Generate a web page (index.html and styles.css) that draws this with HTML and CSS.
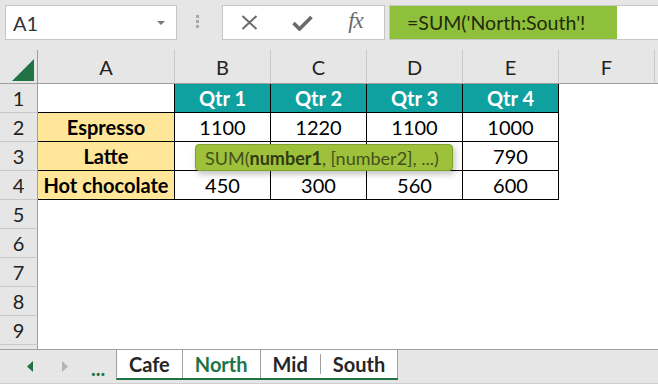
FILE: index.html
```html
<!DOCTYPE html>
<html lang="en">
<head>
    <meta charset="UTF-8">
    <title>North:South</title>
    <link rel="stylesheet" href="styles.css">
</head>
<body>
    <div class="formula-bar">
        <div class="name-box">
            <span>A1</span>
            <svg class="caret" width="8" height="4" viewBox="0 0 8 4"><polygon points="0,0 8,0 4,4" fill="#7a7a7a"/></svg>
        </div>
        <div class="grip"><i></i><i></i><i></i></div>
        <div class="fx-box">
            <span class="fx-slot">
                <svg width="17" height="15" viewBox="0 0 17 15"><path d="M1.5 1 L15.5 14 M15.5 1 L1.5 14" stroke="#6b6b6b" stroke-width="2" fill="none"/></svg>
            </span>
            <span class="fx-slot">
                <svg width="21" height="16" viewBox="0 0 21 16"><polyline points="1.5,8 7.5,14 19.5,2" stroke="#6b6b6b" stroke-width="3.6" fill="none"/></svg>
            </span>
            <span class="fx-slot fx">fx</span>
        </div>
        <div class="formula-input">
            <span class="formula-text">=SUM('North:South'!</span>
        </div>
    </div>

    <div class="sheet">
        <div class="hdr corner">
            <svg width="22" height="22" viewBox="0 0 22 22"><polygon points="22,0 22,22 0,22" fill="#217346"/></svg>
        </div>
        <div class="hdr col-hdr">A</div>
        <div class="hdr col-hdr">B</div>
        <div class="hdr col-hdr">C</div>
        <div class="hdr col-hdr">D</div>
        <div class="hdr col-hdr">E</div>
        <div class="hdr col-hdr">F</div>
        <div class="hdr col-hdr last"></div>

        <div class="hdr row-hdr">1</div>
        <div class="cell"></div>
        <div class="cell qtr">Qtr 1</div>
        <div class="cell qtr">Qtr 2</div>
        <div class="cell qtr">Qtr 3</div>
        <div class="cell qtr">Qtr 4</div>
        <div class="filler"></div>

        <div class="hdr row-hdr">2</div>
        <div class="cell item">Espresso</div>
        <div class="cell">1100</div>
        <div class="cell">1220</div>
        <div class="cell">1100</div>
        <div class="cell">1000</div>
        <div class="filler"></div>

        <!-- B3:D3 sit under the hint box -->
        <div class="hdr row-hdr">3</div>
        <div class="cell item">Latte</div>
        <div class="cell"></div>
        <div class="cell"></div>
        <div class="cell"></div>
        <div class="cell">790</div>
        <div class="filler"></div>

        <div class="hdr row-hdr">4</div>
        <div class="cell item">Hot chocolate</div>
        <div class="cell">450</div>
        <div class="cell">300</div>
        <div class="cell">560</div>
        <div class="cell">600</div>
        <div class="filler"></div>

        <div class="hdr row-hdr">5</div><div class="empty-row"></div>
        <div class="hdr row-hdr">6</div><div class="empty-row"></div>
        <div class="hdr row-hdr">7</div><div class="empty-row"></div>
        <div class="hdr row-hdr">8</div><div class="empty-row"></div>
        <div class="hdr row-hdr">9</div><div class="empty-row"></div>
        <div class="hdr row-hdr"></div><div class="empty-row"></div>

        <div class="tooltip">SUM(<b>number1</b>, [number2], ...)</div>
    </div>

    <div class="tab-bar">
        <div class="tab-nav">
            <svg class="nav-left" width="6" height="11" viewBox="0 0 6 11"><polygon points="6,0 6,11 0,5.5" fill="#217346"/></svg>
            <svg class="nav-right" width="6" height="11" viewBox="0 0 6 11"><polygon points="0,0 0,11 6,5.5" fill="#b4b4b4"/></svg>
            <span class="nav-more">...</span>
        </div>
        <div class="tabs">
            <div class="tab">Cafe</div>
            <div class="tab active">North</div>
            <div class="tab no-edge">Mid</div>
            <span class="tab-divider"></span>
            <div class="tab">South</div>
        </div>
    </div>
</body>
</html>
```

FILE: styles.css
```css
* {
    box-sizing: border-box;
}

body {
    margin: 0;
    width: 658px;
    height: 384px;
    overflow: hidden;
    background-color: #fff;
    font-family: Lato, "Open Sans", sans-serif;
    color: #000;
    display: flex;
    flex-direction: column;
}

/* formula bar */
.formula-bar {
    height: 50px;
    flex: none;
    background-color: #e6e6e6;
    display: flex;
    align-items: flex-start;
    padding-top: 5px;
}

.name-box {
    margin-left: 5px;
    width: 172px;
    height: 35px;
    background-color: #fff;
    border: 1px solid #c6c6c6;
    display: flex;
    align-items: center;
    justify-content: space-between;
    padding: 0 11px 0 7px;
    font-size: 20px;
    color: #333;
}

.caret {
    margin-top: 1px;
}

.grip {
    width: 45px;
    display: flex;
    flex-direction: column;
    align-items: center;
    gap: 2px;
    padding: 10px 5px 0 0;
}

.grip i {
    width: 3px;
    height: 3px;
    background-color: #a9a9a9;
}

.fx-box {
    width: 163px;
    height: 35px;
    background-color: #fff;
    border: 1px solid #c6c6c6;
    display: flex;
    align-items: center;
}

.fx-slot {
    width: 53px;
    display: flex;
    justify-content: center;
    align-items: center;
}

.fx {
    font-family: "Liberation Serif", serif;
    font-style: italic;
    font-size: 23px;
    color: #6b6b6b;
    letter-spacing: -1px;
    margin-top: -3px;
}

.formula-input {
    margin-left: 4px;
    flex: 1;
    height: 35px;
    background-color: #fff;
    border: 1px solid #c6c6c6;
    border-right: none;
    display: flex;
}

.formula-text {
    width: 227px;
    background-color: #8fc03b;
    display: flex;
    align-items: center;
    padding-left: 17px;
    font-size: 19.5px;
    color: #1f2b0c;
}

/* sheet */
.sheet {
    position: relative;
    flex: 1;
    overflow: hidden;
    display: grid;
    grid-template-columns: 38px 137px repeat(5, 96px) 1fr;
    grid-template-rows: 34px;
    grid-auto-rows: 29px;
    font-size: 20px;
}

.hdr {
    background-color: #e6e6e6;
    color: #222;
    display: flex;
    align-items: center;
    justify-content: center;
}

.corner {
    border-right: 1px solid #9e9e9e;
    border-bottom: 1px solid #9e9e9e;
    align-items: flex-end;
    justify-content: flex-end;
    padding: 0 3px 2px 0;
}

.col-hdr {
    border-right: 1px solid #c8c8c8;
    border-bottom: 1px solid #9e9e9e;
}

.col-hdr.last {
    border-right: none;
}

.row-hdr {
    border-right: 1px solid #9e9e9e;
    border-bottom: 1px solid #c8c8c8;
}

.cell {
    border-right: 1px solid #000;
    border-bottom: 1px solid #000;
    display: flex;
    align-items: center;
    justify-content: center;
}

.qtr {
    background-color: #0fa19f;
    color: #fff;
    font-weight: bold;
}

.item {
    background-color: #ffe699;
    font-weight: bold;
}

.filler {
    grid-column: 7 / -1;
}

.empty-row {
    grid-column: 2 / -1;
}

.tooltip {
    position: absolute;
    left: 195px;
    top: 94px;
    width: 258px;
    height: 27px;
    background-color: #9dc13b;
    border: 1px solid #7fa22a;
    border-radius: 4px;
    box-shadow: 2px 3px 6px rgba(0, 0, 0, 0.25);
    display: flex;
    align-items: center;
    padding-left: 9px;
    font-size: 18px;
    color: #43501b;
    white-space: nowrap;
}

.tooltip b {
    color: #2e3a10;
}

/* sheet tabs */
.tab-bar {
    height: 35px;
    flex: none;
    background-color: #e6e6e6;
    border-top: 1px solid #a0a0a0;
    border-bottom: 1px solid #cfcfcf;
    display: flex;
    align-items: flex-start;
}

.tab-nav {
    width: 116px;
    height: 32px;
    display: flex;
    align-items: center;
    padding-left: 27px;
}

.nav-left {
    margin-right: 29px;
}

.nav-right {
    margin-right: 23px;
}

.nav-more {
    color: #217346;
    font-weight: bold;
    font-size: 20px;
    align-self: flex-end;
    line-height: 1;
    margin-bottom: 4px;
}

.tabs {
    display: flex;
    align-items: center;
    background-color: #fff;
    border-left: 1px solid #a0a0a0;
    border-bottom: 2px solid #217346;
}

.tab {
    height: 28px;
    padding: 0 12px;
    display: flex;
    align-items: center;
    border-right: 1px solid #a0a0a0;
    font-weight: bold;
    font-size: 20px;
    color: #262626;
}

.tab.active {
    color: #217346;
}

.tab.no-edge {
    border-right: none;
}

.tab-divider {
    width: 1px;
    height: 20px;
    background-color: #a0a0a0;
}
```
